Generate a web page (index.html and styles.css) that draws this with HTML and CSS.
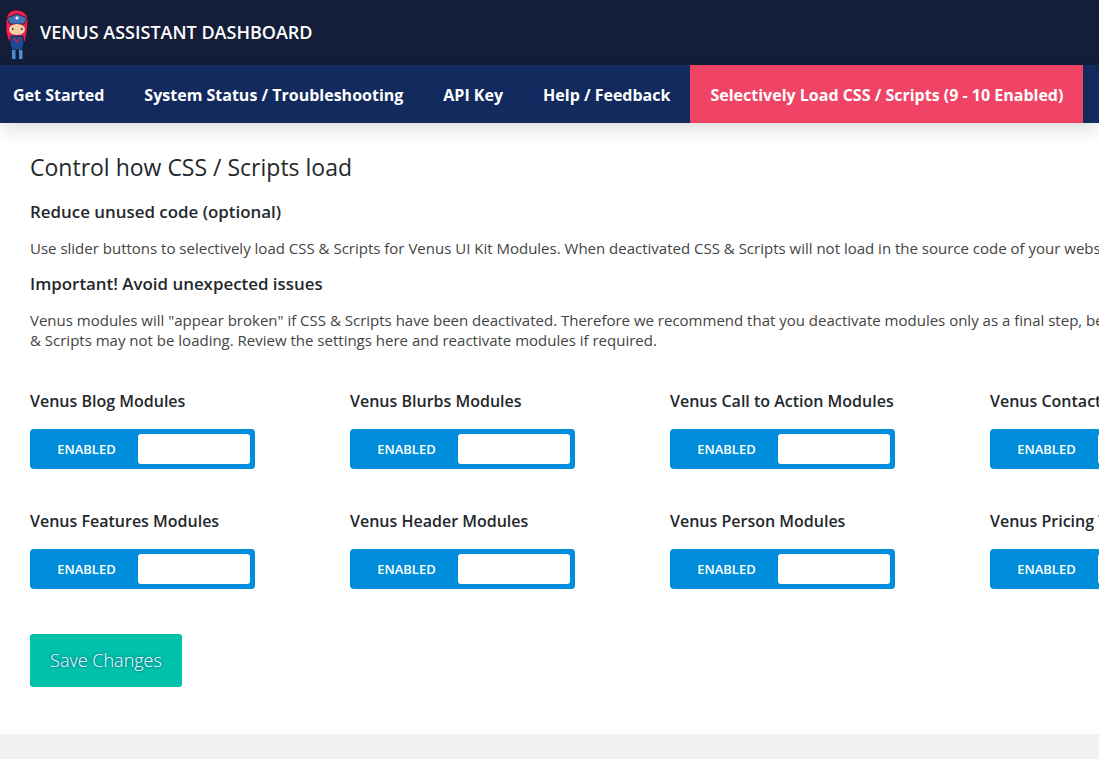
FILE: index.html
```html
<!DOCTYPE html>
<html>
<head>
  <link rel="stylesheet" href="styles.css">
</head>
<body>
  <header class="top-bar">
    <svg class="mascot" width="30" height="50" viewBox="4 9 30 50">
      <path d="M9 42 L6 32 L6 20 C7 13 11 10 16 10 C23 10 28 14 28 21 L27 32 L25 42 Z" fill="#e8204f" stroke="#1a1020" stroke-width="0.700"/>
      <path d="M7 18 L17 14 L27 18 L24 24 L10 24 Z" fill="#4270b4" stroke="#10142a" stroke-width="0.700"/>
      <path d="M15 18 L17 16 L19 18 L17 20 Z" fill="#e8ecf4"/>
      <ellipse cx="17" cy="29.500" rx="8" ry="5.500" fill="#f2cfa4"/>
      <rect x="12" y="28" width="1.500" height="2" fill="#5a3a30"/>
      <rect x="21" y="28" width="1.500" height="2" fill="#5a3a30"/>
      <path d="M11 36 L23 36 L24 44 L22 50 L12 50 L10 44 Z" fill="#1f4a96" stroke="#10142a" stroke-width="0.700"/>
      <path d="M14 38 L17 42 L20 38" fill="none" stroke="#c8203f" stroke-width="1.500"/>
      <rect x="12" y="50" width="3.500" height="9" fill="#4a8ed0"/>
      <rect x="19" y="50" width="3.500" height="9" fill="#4a8ed0"/>
    </svg>
    <span class="brand">VENUS ASSISTANT DASHBOARD</span>
  </header>

  <nav class="tabs">
    <a class="tab">Get Started</a>
    <a class="tab">System Status / Troubleshooting</a>
    <a class="tab">API Key</a>
    <a class="tab">Help / Feedback</a>
    <a class="tab tab-active">Selectively Load CSS / Scripts (9 - 10 Enabled)</a>
  </nav>

  <main class="panel">
    <h1>Control how CSS / Scripts load</h1>
    <h2>Reduce unused code (optional)</h2>
    <p>Use slider buttons to selectively load CSS &amp; Scripts for Venus UI Kit Modules. When deactivated CSS &amp; Scripts will not load in the source code of your website.</p>
    <h2>Important! Avoid unexpected issues</h2>
    <p>Venus modules will "appear broken" if CSS &amp; Scripts have been deactivated. Therefore we recommend that you deactivate modules only as a final step, before going live.<br>&amp; Scripts may not be loading. Review the settings here and reactivate modules if required.</p>

    <div class="modules">
      <div class="module">
        <h3>Venus Blog Modules</h3>
        <div class="toggle"><span class="toggle-label">ENABLED</span><span class="toggle-knob"></span></div>
      </div>
      <div class="module">
        <h3>Venus Blurbs Modules</h3>
        <div class="toggle"><span class="toggle-label">ENABLED</span><span class="toggle-knob"></span></div>
      </div>
      <div class="module">
        <h3>Venus Call to Action Modules</h3>
        <div class="toggle"><span class="toggle-label">ENABLED</span><span class="toggle-knob"></span></div>
      </div>
      <div class="module">
        <h3>Venus Contact Modules</h3>
        <div class="toggle"><span class="toggle-label">ENABLED</span><span class="toggle-knob"></span></div>
      </div>
      <div class="module">
        <h3>Venus Features Modules</h3>
        <div class="toggle"><span class="toggle-label">ENABLED</span><span class="toggle-knob"></span></div>
      </div>
      <div class="module">
        <h3>Venus Header Modules</h3>
        <div class="toggle"><span class="toggle-label">ENABLED</span><span class="toggle-knob"></span></div>
      </div>
      <div class="module">
        <h3>Venus Person Modules</h3>
        <div class="toggle"><span class="toggle-label">ENABLED</span><span class="toggle-knob"></span></div>
      </div>
      <div class="module">
        <h3>Venus Pricing Table Modules</h3>
        <div class="toggle"><span class="toggle-label">ENABLED</span><span class="toggle-knob"></span></div>
      </div>
    </div>

    <button class="save">Save Changes</button>
  </main>
</body>
</html>
```

FILE: styles.css
```css
html, body {
  height: 100%;
}

body {
  margin: 0;
  background: #f1f1f1;
  font-family: 'Open Sans', sans-serif;
  color: #32373c;
  overflow: hidden;
}

.top-bar {
  display: flex;
  align-items: center;
  height: 65px;
  padding-left: 4px;
  background: #141e39;
}

.mascot {
  flex: none;
  margin-top: 3px;
  margin-right: 6px;
}

.brand {
  margin-bottom: 2px;
  color: #fff;
  font-size: 18px;
  font-weight: 600;
}

.tabs {
  position: relative;
  display: flex;
  height: 58px;
  padding-left: 13px;
  background: #122a5e;
  box-shadow: 0 5px 20px rgba(0,0,0,0.15);
}

.tab {
  display: flex;
  align-items: center;
  padding: 2px 20px 0;
  color: #fff;
  font-size: 16px;
  font-weight: 700;
  white-space: nowrap;
}

.tab:first-child {
  padding-left: 0;
}

.tab-active {
  background: #f04466;
}

.panel {
  height: 611px;
  box-sizing: border-box;
  padding: 30px;
  background: #fff;
  white-space: nowrap;
}

h1 {
  margin: 0 0 18px;
  color: #23282d;
  font-size: 23px;
  font-weight: 400;
  line-height: 29px;
}

h2 {
  margin: 0 0 14px;
  color: #23282d;
  font-size: 16.900px;
  font-weight: 600;
  line-height: 24px;
}

p {
  margin: 0 0 14px;
  color: #444;
  font-size: 15px;
  line-height: 20px;
}

.modules {
  display: grid;
  grid-template-columns: repeat(4, 225px);
  column-gap: 95px;
  row-gap: 40px;
  margin-top: 39px;
}

h3 {
  margin: 0 0 16px;
  color: #23282d;
  font-size: 16px;
  font-weight: 600;
  line-height: 24px;
}

.toggle {
  display: flex;
  align-items: center;
  justify-content: space-between;
  height: 40px;
  box-sizing: border-box;
  padding: 5px;
  border-radius: 4px;
  background: #008ddb;
}

.toggle-label {
  width: 103px;
  color: #fff;
  font-size: 13px;
  font-weight: 600;
  text-align: center;
}

.toggle-knob {
  width: 112px;
  height: 30px;
  border-radius: 3px;
  background: #fff;
}

.save {
  display: block;
  width: 152px;
  height: 53px;
  margin-top: 45px;
  padding: 0 0 2px;
  border: none;
  border-radius: 3px;
  background: #00c1a9;
  color: #fff;
  font-family: 'Open Sans', sans-serif;
  font-size: 18px;
  font-weight: 300;
  text-shadow: 0 0 3px rgba(0,60,130,0.9);
}
```
